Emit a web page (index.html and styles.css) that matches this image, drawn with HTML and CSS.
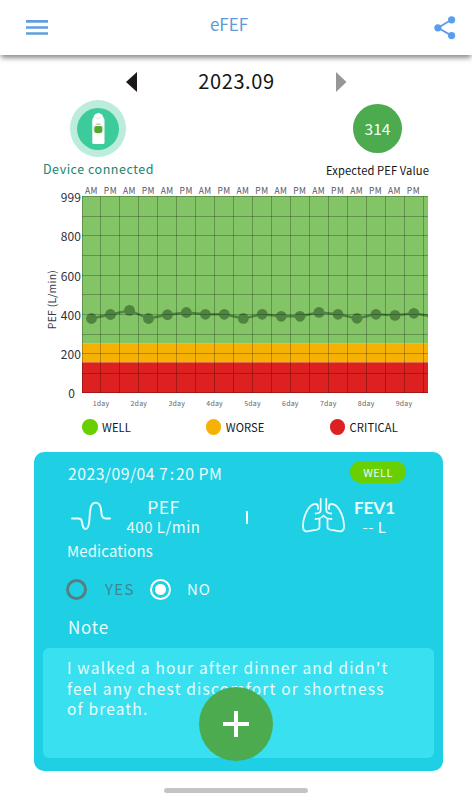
FILE: index.html
```html
<!DOCTYPE html>
<html lang="en">
<head>
    <meta charset="UTF-8">
    <meta name="viewport" content="width=device-width, initial-scale=1.0">
    <title>eFEF</title>
    <link rel="stylesheet" href="styles.css">
</head>
<body>
    <header>
        <svg class="menu-icon" width="22" height="15" viewBox="0 0 22 15">
            <path d="M0 1.4h22M0 7.5h22M0 13.5h22" stroke="#609ee0" stroke-width="2.7"/>
        </svg>
        <h1>eFEF</h1>
        <svg class="share-icon" width="22" height="24" viewBox="0 0 22 24">
            <path d="M17.5 3.8L4 11.8l13.5 7.8" fill="none" stroke="#5b9df0" stroke-width="1.8"/>
            <g fill="#5b9df0">
                <circle cx="17.6" cy="3.8" r="3.6"/>
                <circle cx="3.9" cy="11.8" r="3.6"/>
                <circle cx="17.6" cy="19.6" r="3.6"/>
            </g>
        </svg>
    </header>
    <main>
        <div class="month">
            <svg width="11" height="20" viewBox="0 0 11 20"><path d="M11 0v20L0 10z" fill="#1d1919"/></svg>
            <h2>2023.09</h2>
            <svg width="11" height="20" viewBox="0 0 11 20"><path d="M0 0v20l10.5-10z" fill="#979797"/></svg>
        </div>
        <div class="status">
            <div class="device">
                <svg width="56" height="57" viewBox="0 0 56 57">
                    <ellipse cx="28" cy="28.5" rx="28" ry="28.5" fill="#bcecdb"/>
                    <circle cx="28" cy="29" r="21" fill="#3ccb9b"/>
                    <path d="M22.3 42.5V21q0-2.5 1.6-4.5 0-2.3 2.4-2.7 2.2-1.8 4.2 0 2.4.4 2.4 2.7 1.6 2 1.6 4.5v21.5q0 1.5-1.5 1.5h-9.200q-1.500 0-1.500-1.500z" fill="#fff"/>
                    <circle cx="28.3" cy="28.5" r="4.8" fill="none" stroke="#d5ddd8" stroke-width=".8"/>
                    <path d="M25.5 17q2.8 3.5 5.6 0" fill="none" stroke="#cfe8df" stroke-width=".8"/>
                    <rect x="24.3" y="26" width="8" height="7" rx="2" fill="#55a728"/>
                    <path d="M26.3 24.2h4" stroke="#98a79c" stroke-width=".8"/>
                </svg>
                <p>Device connected</p>
            </div>
            <div class="expected">
                <span class="expected-value">314</span>
                <p>Expected PEF Value</p>
            </div>
        </div>

        <div class="chart">
            <div class="axis-title"><span>PEF (L/min)</span></div>
            <div class="axis-values">
                <span>999</span><span>800</span><span>600</span><span>400</span><span>200</span><span class="zero">0</span>
            </div>
            <div class="plot">
                <div class="half-days">
                    <span>AM</span><span>PM</span><span>AM</span><span>PM</span><span>AM</span><span>PM</span>
                    <span>AM</span><span>PM</span><span>AM</span><span>PM</span><span>AM</span><span>PM</span>
                    <span>AM</span><span>PM</span><span>AM</span><span>PM</span><span>AM</span><span>PM</span>
                </div>
                <svg width="346" height="197" viewBox="0 0 346 197">
                    <rect width="346" height="147.5" fill="#83c566"/>
                    <rect y="147.3" width="346" height="19.2" fill="#f5b204"/>
                    <rect y="166.4" width="346" height="30.6" fill="#dd2121"/>
                    <polyline points="9.5,122.5 28.5,118.5 47.5,114.4 66.5,122.5 85.5,118.7 104.4,116.5 123.4,118.3 142.3,118.3 161.3,122.4 180.2,118.3 199.2,120.3 218,120.3 237,116.4 256,118.3 275,122.3 294,118.3 313,119.4 331.8,117.3 346,119.8" fill="none" stroke="#4b873c" stroke-width="2.4"/>
                    <g fill="#4f8340">
                        <circle cx="9.5" cy="122.5" r="5.4"/>
                        <circle cx="28.5" cy="118.5" r="5.4"/>
                        <circle cx="47.5" cy="114.4" r="5.4"/>
                        <circle cx="66.5" cy="122.5" r="5.4"/>
                        <circle cx="85.5" cy="118.7" r="5.4"/>
                        <circle cx="104.4" cy="116.5" r="5.4"/>
                        <circle cx="123.4" cy="118.3" r="5.4"/>
                        <circle cx="142.3" cy="118.3" r="5.4"/>
                        <circle cx="161.3" cy="122.4" r="5.4"/>
                        <circle cx="180.2" cy="118.3" r="5.4"/>
                        <circle cx="199.2" cy="120.3" r="5.4"/>
                        <circle cx="218" cy="120.3" r="5.4"/>
                        <circle cx="237" cy="116.4" r="5.4"/>
                        <circle cx="256" cy="118.3" r="5.4"/>
                        <circle cx="275" cy="122.3" r="5.4"/>
                        <circle cx="294" cy="118.3" r="5.4"/>
                        <circle cx="313" cy="119.4" r="5.4"/>
                        <circle cx="331.8" cy="117.3" r="5.4"/>
                    </g>
                    <path class="grid-lines" d="M18.5 0v197M37.5 0v197M56.5 0v197M75.5 0v197M94.5 0v197M113.5 0v197M132.5 0v197M151.5 0v197M170.5 0v197M189.5 0v197M208.5 0v197M227.5 0v197M246.5 0v197M265.5 0v197M284.5 0v197M303.5 0v197M322.5 0v197M341.5 0v197M0 20.5h346M0 39.5h346M0 59.5h346M0 79.5h346M0 98.5h346M0 118.5h346M0 138.5h346M0 157.5h346M0 177.5h346"/>
                    <path class="frame" d="M.5 0v196.5H346M0 .5h346"/>
                </svg>
                <div class="days">
                    <span>1day</span><span>2day</span><span>3day</span><span>4day</span><span>5day</span><span>6day</span><span>7day</span><span>8day</span><span>9day</span>
                </div>
            </div>
        </div>
        <ul class="legend">
            <li class="well">WELL</li>
            <li class="worse">WORSE</li>
            <li class="critical">CRITICAL</li>
        </ul>

        <section class="record">
            <div class="record-head">
                <h3>2023/09/04 7<span class="colon">:</span>20 PM</h3>
                <span class="badge">WELL</span>
            </div>
            <div class="measures">
                <svg class="wave-icon" width="40" height="30" viewBox="0 0 40 30">
                    <path d="M1 17.5h6.5q3 0 3.5 3.5c.6 4.5 1.4 7 3.5 7s3.200-2.500 3.800-8c.8-8 .2-18.300 6.200-18.300s5.400 8 6.200 12q.8 3.800 4.300 3.800h4" fill="none" stroke="#e2fbfc" stroke-width="2" stroke-linecap="round"/>
                </svg>
                <div class="pef">
                    <b>PEF</b>
                    <span>400 L/min</span>
                </div>
                <i class="divider"></i>
                <svg class="lungs-icon" width="43" height="36" viewBox="0 0 43 36">
                    <g fill="none" stroke="#e9fdfd" stroke-width="1.8" stroke-linecap="round" stroke-linejoin="round">
                        <path d="M18.7 1v11q0 3.5-5 3.5M24.3 1v11q0 3.5 5 3.5"/>
                        <path d="M16 11V8.500q0-2.500-2.800-2.500C7.500 6 1 17 1 28.500c0 5.500 3.500 5.500 8 4.200 3.500-1.200 8.500.2 8.500-3.700v-8"/>
                        <path d="M27 11V8.500q0-2.500 2.800-2.500C35.500 6 42 17 42 28.500c0 5.500-3.500 5.500-8 4.200-3.500-1.200-8.500.2-8.500-3.700v-8"/>
                        <path d="M13.5 21q5 0 8-3.5 3 3.5 8 3.5"/>
                    </g>
                </svg>
                <div class="fev">
                    <b>FEV1</b>
                    <span>-- L</span>
                </div>
            </div>
            <h4>Medications</h4>
            <div class="options">
                <span class="radio"></span>
                <span class="yes">YES</span>
                <span class="radio checked"></span>
                <span class="no">NO</span>
            </div>
            <h5>Note</h5>
            <div class="note">I walked a hour after dinner and didn't<br>feel any chest discomfort or shortness<br>of breath.</div>
            <button class="add" aria-label="Add">
                <svg width="26" height="26" viewBox="0 0 26 26"><path d="M13 0v26M0 13h26" stroke="#fff" stroke-width="4"/></svg>
            </button>
        </section>
        <div class="home-bar"></div>
    </main>
</body>
</html>
```
FILE: styles.css
```css
* {
    box-sizing: border-box;
}
body {
    margin: 0;
    width: 472px;
    height: 800px;
    overflow: hidden;
    background-color: #fff;
    color: #151515;
    font-family: "Noto Sans CJK SC", "Noto Sans", sans-serif;
    font-weight: 400;
    white-space: nowrap;
}
h1, h2, h3, h4, h5, p, ul {
    margin: 0;
    padding: 0;
    font-weight: inherit;
}
svg {
    display: block;
    flex-shrink: 0;
}
header {
    height: 55px;
    padding: 0 16px 0 26px;
    display: flex;
    justify-content: space-between;
    box-shadow: 0 4px 5px -1px rgba(0, 0, 0, 0.45);
}
.menu-icon {
    margin-top: 20px;
}
.share-icon {
    margin-top: 16px;
}
header h1 {
    margin: 10px 0 0 -24px;
    font-size: 17px;
    line-height: 28px;
    color: #5d9bdb;
}
.month {
    height: 45px;
    padding: 9px 125px 0 126px;
    display: flex;
    align-items: center;
    justify-content: space-between;
}
.month h2 {
    margin-top: -2px;
    font-size: 20px;
    line-height: 30px;
    letter-spacing: 0.6px;
}
.status {
    height: 84px;
    padding: 0 43px;
    display: flex;
    justify-content: space-between;
}
.device, .expected {
    display: flex;
    flex-direction: column;
    align-items: center;
}
.device p {
    margin-top: 3px;
    font-size: 12.5px;
    line-height: 18px;
    letter-spacing: 0.52px;
    color: #20846f;
}
.expected-value {
    width: 49px;
    height: 49px;
    margin-top: 4px;
    border-radius: 50%;
    background-color: #4caa4f;
    color: #f2fff2;
    font-size: 15.5px;
    line-height: 48px;
    text-align: center;
}
.expected p {
    margin-top: 9px;
    font-size: 11.2px;
    line-height: 16px;
    letter-spacing: 0.1px;
}
.chart {
    height: 226px;
    padding-left: 43px;
    display: flex;
}
.axis-title {
    width: 17px;
    padding-top: 86px;
}
.axis-title span {
    display: block;
    writing-mode: vertical-rl;
    transform: rotate(180deg);
    font-size: 10.5px;
    line-height: 17px;
    letter-spacing: 0.2px;
    color: #333844;
}
.axis-values {
    width: 22px;
    padding-top: 4px;
    display: flex;
    flex-direction: column;
    text-align: right;
    font-size: 12px;
    line-height: 18px;
    letter-spacing: 0.1px;
    color: #30303c;
}
.axis-values span {
    flex: none;
    height: 39.25px;
    margin-right: 1px;
}
.axis-values .zero {
    height: 18px;
    margin-right: 7px;
}
.plot {
    width: 346px;
}
.half-days {
    display: flex;
    height: 12px;
    font-size: 8.5px;
    line-height: 12px;
    letter-spacing: 0.4px;
    color: #55555f;
}
.half-days span {
    width: 18.94px;
    flex-shrink: 0;
    text-align: center;
}
.grid-lines, .frame {
    fill: none;
    stroke: #000;
    stroke-opacity: 0.25;
}
.days {
    display: flex;
    padding-top: 5px;
    font-size: 7px;
    line-height: 10px;
    letter-spacing: 0.2px;
    color: #666;
}
.days span {
    width: 37.9px;
    flex-shrink: 0;
    text-align: center;
}
.legend {
    display: flex;
    height: 42px;
    padding: 8px 0 0 82px;
    align-items: flex-start;
    list-style: none;
    font-size: 11.2px;
    line-height: 18px;
    letter-spacing: 0.1px;
}
.legend li {
    display: flex;
    align-items: center;
    width: 123.8px;
}
.legend li::before {
    content: "";
    width: 15.5px;
    height: 15.5px;
    margin-right: 4.5px;
    border-radius: 50%;
}
.well::before {
    background-color: #68d000;
}
.worse::before {
    background-color: #f5b204;
}
.critical::before {
    background-color: #dd2121;
}
.record {
    position: relative;
    width: 409px;
    height: 319px;
    margin-left: 34px;
    padding: 0 9px;
    border-radius: 10px;
    background-color: #1fcfe4;
    color: #e9fdfd;
}
.record-head {
    display: flex;
    justify-content: space-between;
    height: 34px;
    padding: 9px 28px 0 25px;
}
.record-head h3 {
    font-size: 15.8px;
    line-height: 26px;
    letter-spacing: 0.45px;
}
.colon {
    padding: 0 1.5px;
}
.badge {
    width: 56px;
    height: 21.5px;
    border-radius: 11px;
    background-color: #68d000;
    font-size: 11px;
    line-height: 22px;
    letter-spacing: 0.4px;
    text-align: center;
}
.measures {
    display: flex;
    height: 54px;
    padding: 11px 0 0 28px;
}
.wave-icon {
    margin-top: 4px;
}
.pef, .fev {
    display: flex;
    flex-direction: column;
    align-items: center;
    font-size: 15px;
    line-height: 18px;
    letter-spacing: 0.5px;
}
.pef {
    width: 73px;
    margin-left: 16px;
}
.measures b {
    font-size: 17.5px;
    line-height: 20px;
    font-weight: 400;
}
.pef span {
    line-height: 20px;
}
.divider {
    width: 2px;
    height: 13px;
    margin: 14px 54px 0 45.5px;
    background-color: #e9fdfd;
}
.lungs-icon {
    margin-top: 1px;
}
.fev {
    width: 42px;
    margin-left: 9px;
}
.measures .fev b {
    padding-top: 1px;
    font-family: Lato, sans-serif;
    font-size: 17px;
    line-height: 20px;
    letter-spacing: 0;
    font-weight: 700;
}
.record h4 {
    padding-left: 24px;
    font-size: 15px;
    line-height: 22px;
    letter-spacing: 0.1px;
}
.options {
    display: flex;
    align-items: center;
    height: 54px;
    padding: 0 0 0 23px;
    font-size: 15px;
    line-height: 22px;
}
.options span {
    flex-shrink: 0;
}
.radio {
    width: 21px;
    height: 21px;
    border: 3px solid #567f84;
    border-radius: 50%;
}
.radio.checked {
    border: 2px solid #fff;
    background: radial-gradient(circle, #fff 5px, transparent 6px);
}
.yes {
    width: 45px;
    margin-left: 18px;
    color: #43858e;
    letter-spacing: 1.4px;
}
.no {
    margin-left: 16px;
    letter-spacing: 1px;
}
.record h5 {
    margin-top: -2px;
    padding-left: 25px;
    font-size: 17px;
    line-height: 26px;
    letter-spacing: 0.8px;
}
.note {
    width: 391px;
    height: 110px;
    margin-top: 8px;
    padding: 9px 24px;
    border-radius: 6px;
    background-color: #38e0f0;
    font-size: 15.5px;
    line-height: 20.5px;
    letter-spacing: 1.17px;
}
/* floats over the note */
.add {
    position: absolute;
    left: 165px;
    bottom: 10px;
    width: 74px;
    height: 74px;
    padding: 0;
    display: flex;
    align-items: center;
    justify-content: center;
    border: none;
    border-radius: 50%;
    background-color: #4caa4f;
}
.home-bar {
    width: 144px;
    height: 5px;
    margin: 17px 0 0 164px;
    border-radius: 3px;
    background-color: #c4c4c4;
}
```
